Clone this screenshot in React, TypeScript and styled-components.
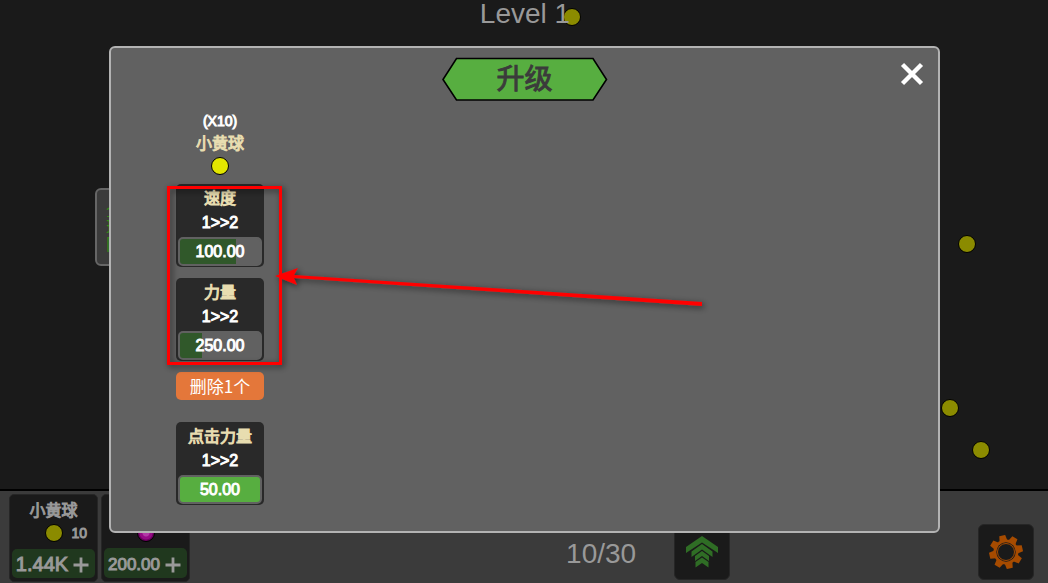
import React from "react";
import styled, { createGlobalStyle, css } from "styled-components";

const GlobalStyle = createGlobalStyle`
  * { box-sizing: border-box; }
  body {
    margin: 0;
    background: #1a1a1a;
    font-family: "Liberation Sans", "Noto Sans CJK SC", sans-serif;
  }
  button { font: inherit; border: 0; padding: 0; margin: 0; cursor: pointer; }
  h1, h2, h3, p { margin: 0; }
`;

const outlined = css`
  font-weight: 400;
  -webkit-text-stroke: 1px currentColor;
`;

const Page = styled.div`
  position: relative;
  min-height: 100vh;
  display: flex;
  flex-direction: column;
  overflow: hidden;
`;

const Field = styled.main`
  position: relative;
  flex: 1;
  background: #1a1a1a;
`;

const Level = styled.h1`
  position: relative;
  z-index: 1;
  padding-left: 2px;
  text-align: center;
  font-size: 28px;
  line-height: 28px;
  font-weight: 400;
  color: #999;
`;

const Ball = styled.span<{ $color?: string }>`
  display: block;
  flex: none;
  width: 18px;
  height: 18px;
  border-radius: 50%;
  border: 1px solid #000;
  background: ${(p) => p.$color ?? "#8b8b00"};
`;

const FieldBall = styled(Ball)<{ $x: number; $y: number }>`
  position: absolute;
  left: ${(p) => p.$x}px;
  top: ${(p) => p.$y}px;
`;

const SideTab = styled.button`
  position: absolute;
  left: 95px;
  top: 188px;
  width: 32px;
  height: 78px;
  border: 2px solid #666;
  border-radius: 6px;
  background: #3b3b3b;
  color: #2f8a1a;
  font-size: 16px;
  line-height: 17px;
  padding-left: 9px;
  text-align: left;
`;

const Bar = styled.footer`
  display: flex;
  align-items: flex-start;
  height: 94px;
  padding: 3px 14px 0 9px;
  border-top: 2px solid #000;
  background: #3b3b3b;
`;

const Shop = styled.div`
  display: flex;
  gap: 3px;
  flex: 17 1 0;
`;

const ShopCard = styled.section`
  display: flex;
  flex-direction: column;
  width: 89px;
  height: 88px;
  padding: 3px 2px;
  border: 1px solid #262626;
  border-radius: 5px;
  background: #1a1a1a;
  color: #999;
`;

const ShopName = styled.h2`
  height: 24px;
  text-align: center;
  font-size: 16px;
  line-height: 26px;
  ${outlined}
`;

const ShopStock = styled.div`
  display: grid;
  grid-template-columns: 1fr 18px 1fr;
  align-items: center;
  column-gap: 9px;
  height: 24px;
  font-size: 14px;
  ${outlined}

  ${Ball} { grid-column: 2; }
`;

const Buy = styled.button<{ $large?: boolean }>`
  display: flex;
  align-items: center;
  justify-content: center;
  gap: 5px;
  height: 31px;
  margin-top: 4px;
  padding: 3px 2px 0 0;
  border-radius: 5px;
  background: #20381e;
  color: #999;
  font-size: ${(p) => (p.$large ? 20 : 17)}px;
  ${outlined}
`;

const Count = styled.p`
  width: 72px;
  padding-top: 46px;
  text-align: center;
  font-size: 28px;
  line-height: 28px;
  color: #999;
`;

const Tools = styled.nav`
  flex: 11 1 0;
  display: flex;
  justify-content: space-between;
  padding: 30px 0 0 37px;
`;

const Tool = styled.button`
  display: grid;
  place-items: center;
  width: 56px;
  height: 56px;
  border: 1px solid #262626;
  border-radius: 6px;
  background: #1a1a1a;
`;

const Overlay = styled.div`
  position: absolute;
  inset: 0;
  z-index: 2;
  display: flex;
  padding: 46px 108px 50px 109px;
`;

const Dialog = styled.section`
  flex: 1;
  display: flex;
  flex-direction: column;
  border: 2px solid #b3b3b3;
  border-radius: 6px;
  background: #616161;
`;

const DialogHead = styled.header`
  display: grid;
  grid-template-columns: 1fr 166px 1fr;
  align-items: start;
  padding: 9px 6px 0;
`;

const Banner = styled.div`
  position: relative;
  grid-column: 2;
  height: 44px;
  svg { display: block; }
`;

const BannerText = styled.h2`
  position: absolute;
  inset: 0;
  text-align: center;
  font-size: 28px;
  line-height: 46px;
  color: #3b3b3b;
  ${outlined}
`;

const Close = styled.button`
  justify-self: end;
  display: grid;
  place-items: center;
  width: 40px;
  height: 34px;
  background: transparent;
`;

const Column = styled.div`
  display: flex;
  flex-direction: column;
  width: 88px;
  margin: 11px 0 0 65px;
  text-align: center;
`;

const Amount = styled.p`
  font-size: 14px;
  line-height: 18px;
  color: #fff;
  ${outlined}
`;

const BallName = styled.h3`
  font-size: 16px;
  line-height: 27px;
  color: #e8ddb0;
  ${outlined}
`;

const BallRow = styled.div`
  display: flex;
  justify-content: center;
  height: 27px;
`;

const Stack = styled.div`
  display: flex;
  flex-direction: column;
  gap: 11px;
`;

const Card = styled.section`
  height: 83px;
  padding: 3px 2px 1px;
  border-radius: 5px;
  background: #292929;
`;

const CardName = styled.h3`
  font-size: 16px;
  line-height: 24px;
  color: #e8ddb0;
  ${outlined}
`;

const CardStep = styled.p`
  font-size: 16px;
  line-height: 24px;
  color: #fff;
  ${outlined}
`;

const Price = styled.button<{ $fill: number }>`
  display: block;
  width: 84px;
  height: 29px;
  margin-top: 2px;
  border: 2px solid #616161;
  border-radius: 5px;
  background: ${(p) =>
    p.$fill === 100
      ? "#57ae40"
      : `linear-gradient(90deg, #30582a ${p.$fill}%, #616161 ${p.$fill}%)`};
  font-size: 16px;
  line-height: 24px;
  color: #fff;
  ${outlined}
`;

const Remove = styled.button`
  height: 28px;
  margin-bottom: 11px;
  border-radius: 5px;
  background: #e4773a;
  color: #fff;
  font-family: "Noto Sans CJK SC", sans-serif;
  font-size: 17px;
  line-height: 26px;
`;

const Markup = styled.svg`
  position: absolute;
  left: 0;
  top: 0;
  z-index: 3;
  pointer-events: none;
`;

const balls = [
  [563, 8],
  [958, 235],
  [941, 399],
  [972, 441],
];

function Plus() {
  return (
    <svg width="16" height="16" viewBox="0 0 16 16" aria-hidden="true">
      <path d="M8 0.5V15.5M0.5 8H15.5" stroke="#999" strokeWidth="2.800" />
    </svg>
  );
}

function Upgrade({ name, price, fill }: { name: string; price: string; fill: number }) {
  return (
    <Card>
      <CardName>{name}</CardName>
      <CardStep>1&gt;&gt;2</CardStep>
      <Price $fill={fill}>{price}</Price>
    </Card>
  );
}

function Chevrons() {
  return (
    <svg width="34" height="34" viewBox="0 0 34 34" fill="#2f6d25" aria-hidden="true">
      <path d="M17 1 33 12V18L17 7.500 1 18V12Z" />
      <path d="M17 9 27.500 16.500V22L17 14.500 6.500 22V16.500Z" />
      <path d="M17 16 24 21V26L17 21 10 26V21Z" />
      <path d="M17 22.500 23.500 27V32.500L17 28 10.500 32.500V27Z" />
    </svg>
  );
}

function Gear() {
  const tooth = "M-4 -11 -3 -16.800H3L4 -11Z";
  return (
    <svg width="34" height="34" viewBox="-17 -17 34 34" aria-hidden="true">
      <g fill="#a64b00">
        {[0, 1, 2, 3, 4, 5, 6, 7].map((i) => (
          <path key={i} d={tooth} transform={`rotate(${i * 45 - 13})`} />
        ))}
        <circle r="12.500" />
      </g>
      <circle r="9.700" fill="#1a1a1a" />
      <circle r="8.500" fill="none" stroke="#a64b00" strokeWidth="1" />
    </svg>
  );
}

export default function App() {
  return (
    <Page>
      <GlobalStyle />
      <Field>
        <Level>Level 1</Level>
        {balls.map(([x, y]) => (
          <FieldBall key={x} $x={x} $y={y} />
        ))}
        <SideTab>全球网</SideTab>
      </Field>
      <Bar>
        <Shop>
          <ShopCard>
            <ShopName>小黄球</ShopName>
            <ShopStock>
              <Ball />
              <span>10</span>
            </ShopStock>
            <Buy $large>
              1.44K
              <Plus />
            </Buy>
          </ShopCard>
          <ShopCard>
            <ShopName />
            <ShopStock>
              <Ball $color="radial-gradient(circle, #b23aa6 0 3px, #960a86 4px 6px, #6c0060 7px)" />
            </ShopStock>
            <Buy>
              200.00
              <Plus />
            </Buy>
          </ShopCard>
        </Shop>
        <Count>10/30</Count>
        <Tools>
          <Tool aria-label="升级">
            <Chevrons />
          </Tool>
          <Tool aria-label="设置">
            <Gear />
          </Tool>
        </Tools>
      </Bar>
      <Overlay>
        <Dialog role="dialog" aria-label="升级">
          <DialogHead>
            <Banner>
              <svg width="166" height="44" viewBox="0 0 166 44" aria-hidden="true">
                <path d="M14.500 1.500H151L164.500 22.500 151 43H14.500L1 22.500Z" fill="#57ae40" stroke="#000" strokeWidth="1.600" />
              </svg>
              <BannerText>升级</BannerText>
            </Banner>
            <Close aria-label="关闭">
              <svg width="24" height="24" viewBox="0 0 24 24" aria-hidden="true">
                <path d="M2.500 2.500 21.500 21.500M21.500 2.500 2.500 21.500" stroke="#fff" strokeWidth="4.400" />
              </svg>
            </Close>
          </DialogHead>
          <Column>
            <Amount>(X10)</Amount>
            <BallName>小黄球</BallName>
            <BallRow>
              <Ball $color="#e3e600" />
            </BallRow>
            <Stack>
              <Upgrade name="速度" price="100.00" fill={70} />
              <Upgrade name="力量" price="250.00" fill={28} />
              <Remove>删除1个</Remove>
              <Upgrade name="点击力量" price="50.00" fill={100} />
            </Stack>
          </Column>
        </Dialog>
      </Overlay>
      <Markup width="720" height="400" viewBox="0 0 720 400" aria-hidden="true">
        <defs>
          <filter id="shade" x="-10%" y="-20%" width="120%" height="150%">
            <feDropShadow dx="2" dy="2" stdDeviation="3" floodColor="#000" floodOpacity="0.6" />
          </filter>
        </defs>
        <g filter="url(#shade)">
          <rect x="168.500" y="187.500" width="112" height="176" fill="none" stroke="#f00" strokeWidth="3" />
          <path d="M275 276 298 268 294 275 702 302V306L294 278 297 285Z" fill="#f00" />
        </g>
      </Markup>
    </Page>
  );
}
